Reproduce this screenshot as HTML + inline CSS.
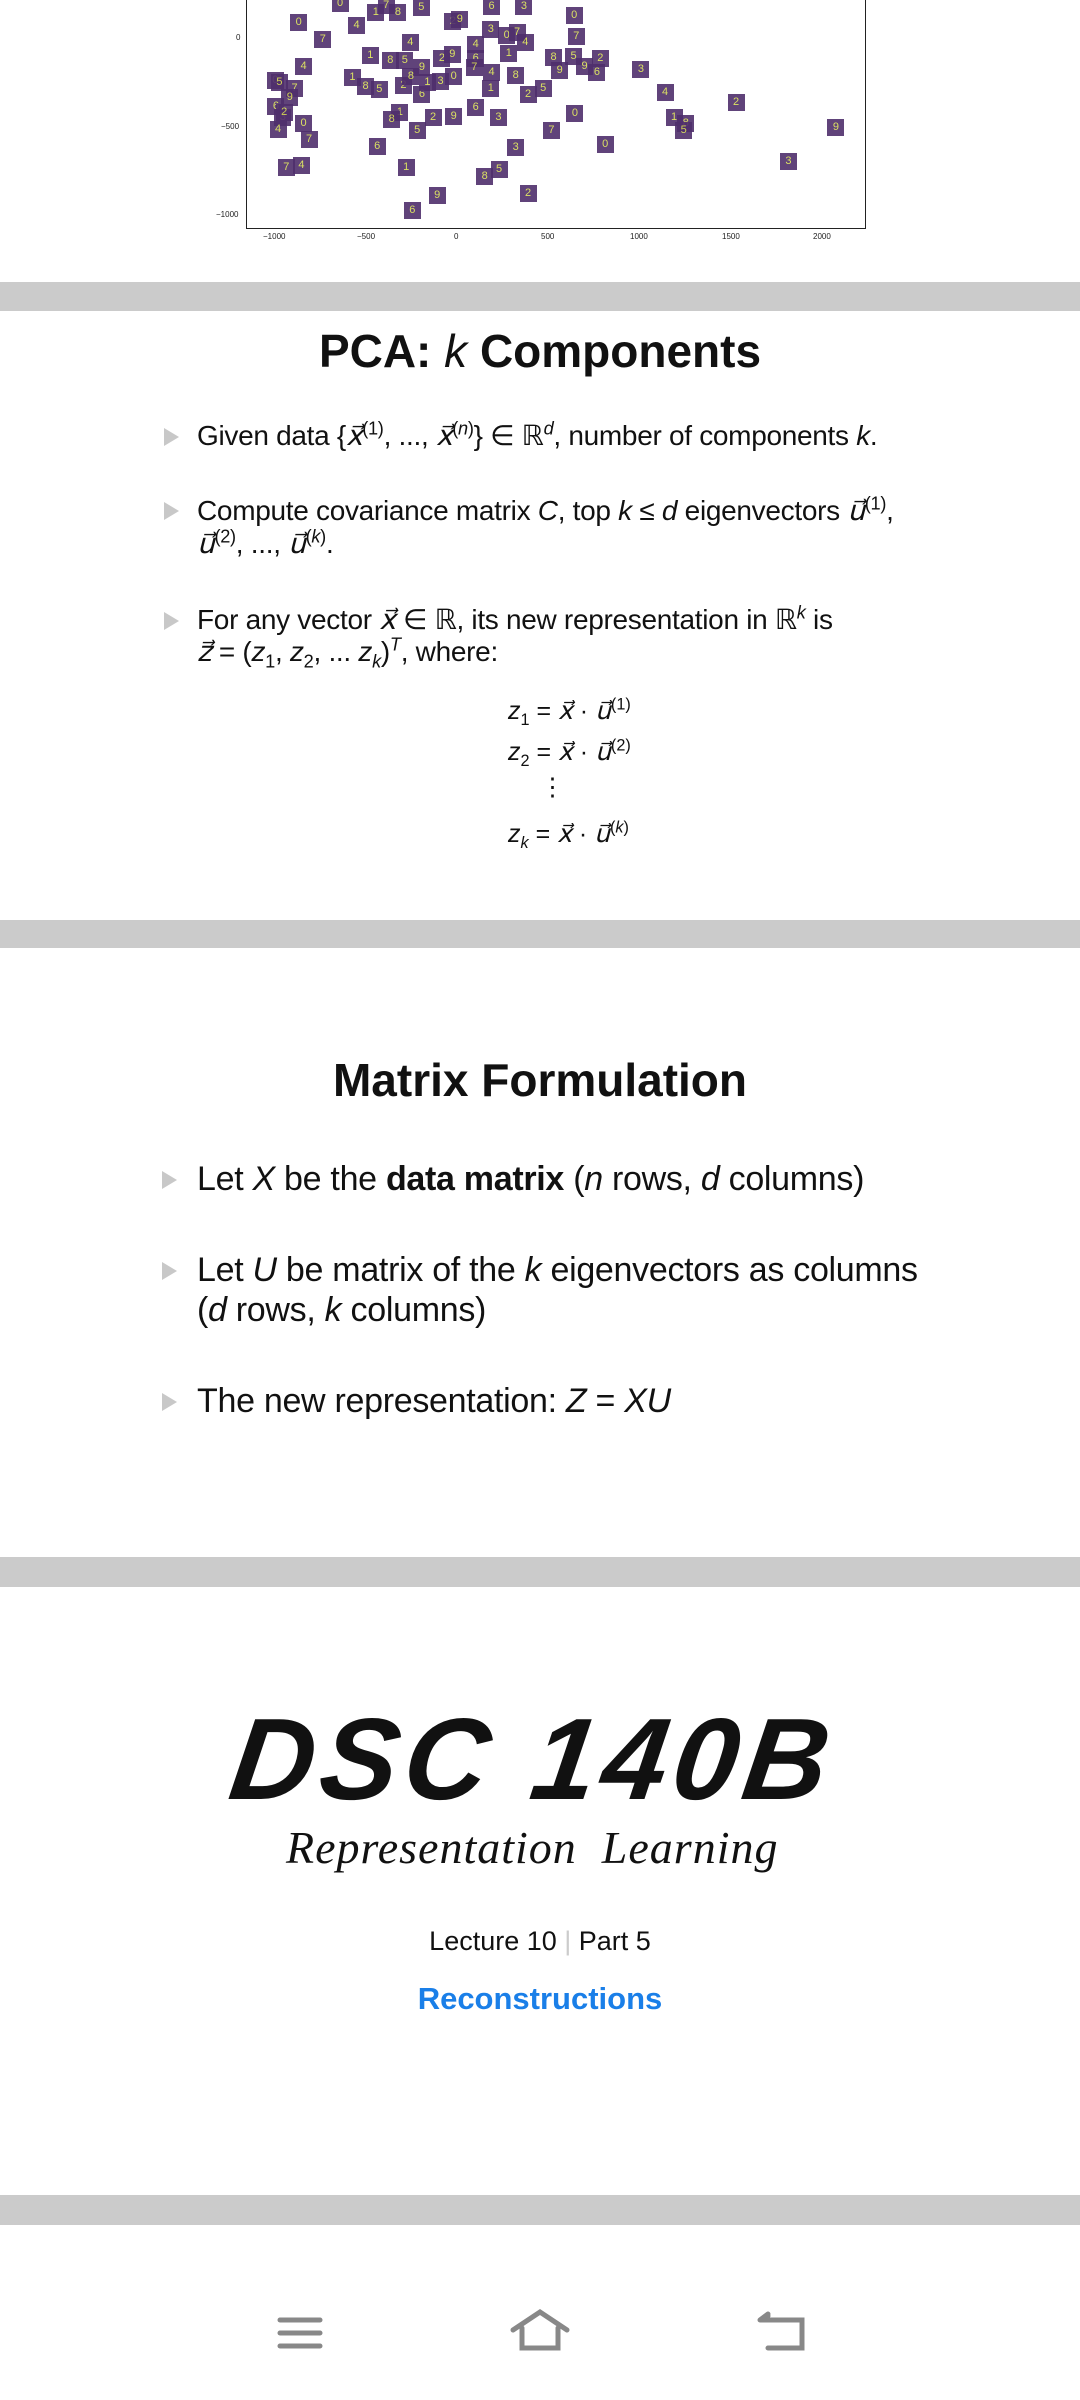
<!DOCTYPE html>
<html><head><meta charset="utf-8"><style>
*{margin:0;padding:0;box-sizing:border-box}
body{width:1080px;height:2400px;background:#fff;position:relative;overflow:hidden;font-family:"Liberation Sans Narrow","Liberation Sans",sans-serif;color:#111}
.a{position:absolute;white-space:nowrap}
.band{position:absolute;left:0;width:1080px;background:#cbcbcb}
.tri{position:absolute;width:0;height:0;border-top:9px solid transparent;border-bottom:9px solid transparent;border-left:15px solid #c8c8c8}
.t{position:absolute;left:0;width:1080px;text-align:center;font-family:"Liberation Sans",sans-serif;font-weight:bold}
.p{font-size:28px;letter-spacing:-0.3px}
.m{font-size:34px;letter-spacing:-0.3px}
i{font-style:italic}
sup,sub{font-size:65%;line-height:0}
.d{position:absolute;width:17px;height:17px;background:#4f2f6c;color:#d8df52;font-size:11px;line-height:17px;text-align:center;font-family:"Liberation Sans",sans-serif;opacity:.9}
.tk{position:absolute;font-size:8px;font-family:"Liberation Sans",sans-serif;color:#222}
</style></head><body>
<div class="a" style="left:246px;top:-2px;width:620px;height:231px;border:1.5px solid #222;border-top:none"></div>
<div id="pl"></div>
<div class="tk" style="left:236px;top:33px">0</div>
<div class="tk" style="left:221px;top:122px">−500</div>
<div class="tk" style="left:216px;top:210px">−1000</div>
<div class="tk" style="left:263px;top:232px">−1000</div>
<div class="tk" style="left:357px;top:232px">−500</div>
<div class="tk" style="left:454px;top:232px">0</div>
<div class="tk" style="left:541px;top:232px">500</div>
<div class="tk" style="left:630px;top:232px">1000</div>
<div class="tk" style="left:722px;top:232px">1500</div>
<div class="tk" style="left:813px;top:232px">2000</div>
<script>
var P=[[433,38],[468,67],[517,42],[545,20],[577,20],[611,12],[657,35],[667,32],[713,10],[760,10],[833,25],[836,62],[595,72],[537,93],[566,103],[587,103],[641,98],[656,92],[690,98],[712,50],[735,60],[750,55],[762,72],[738,90],[803,97],[832,95],[871,98],[848,112],[866,123],[930,117],[399,136],[427,150],[440,113],[511,131],[530,146],[550,152],[585,145],[612,115],[612,160],[639,138],[658,130],[688,115],[713,122],[712,150],[748,127],[788,150],[766,160],[812,120],[400,180],[410,200],[440,210],[448,237],[403,220],[580,190],[568,203],[605,222],[628,200],[658,198],[690,183],[723,200],[834,192],[800,222],[965,157],[978,200],[995,210],[992,222],[1068,174],[1213,217],[547,249],[748,250],[878,245],[415,285],[437,281],[589,284],[703,300],[724,288],[766,329],[634,332],[598,358],[1144,275],[493,5],[560,8],[690,75],[620,140],[596,130],[405,140],[412,190],[420,165]];
var D="0123456789",h="";
P.forEach(function(p,i){h+='<div class="d" style="left:'+(p[0]/1.452-8)+'px;top:'+(p[1]/1.704-8)+'px">'+D[(i*7)%10]+'</div>';});
document.getElementById('pl').innerHTML=h;
</script>

<div class="band" style="top:282px;height:29px"></div>

<div class="t" style="top:324px;font-size:46px">PCA: <i style="font-weight:normal">k</i> Components</div>
<div class="tri" style="left:164px;top:428px"></div>
<div class="a p" style="left:197px;top:419px">Given data {<i>x⃗</i><sup>(1)</sup>, ..., <i>x⃗</i><sup>(<i>n</i>)</sup>} ∈ ℝ<sup><i>d</i></sup>, number of components <i>k</i>.</div>
<div class="tri" style="left:164px;top:502px"></div>
<div class="a p" style="left:197px;top:494px">Compute covariance matrix <i>C</i>, top <i>k</i> ≤ <i>d</i> eigenvectors <i>u⃗</i><sup>(1)</sup>,</div>
<div class="a p" style="left:197px;top:527px"><i>u⃗</i><sup>(2)</sup>, ..., <i>u⃗</i><sup>(<i>k</i>)</sup>.</div>
<div class="tri" style="left:164px;top:612px"></div>
<div class="a p" style="left:197px;top:603px">For any vector <i>x⃗</i> ∈ ℝ, its new representation in ℝ<sup><i>k</i></sup> is</div>
<div class="a p" style="left:197px;top:635px"><i>z⃗</i> = (<i>z</i><sub>1</sub>, <i>z</i><sub>2</sub>, ... <i>z<sub>k</sub></i>)<sup><i>T</i></sup>, where:</div>
<div class="a" style="left:508px;top:696px;font-size:25px"><i>z</i><sub>1</sub> = <i>x⃗</i> · <i>u⃗</i><sup>(1)</sup></div>
<div class="a" style="left:508px;top:737px;font-size:25px"><i>z</i><sub>2</sub> = <i>x⃗</i> · <i>u⃗</i><sup>(2)</sup></div>
<div class="a" style="left:540px;top:772px;font-size:25px">⋮</div>
<div class="a" style="left:508px;top:819px;font-size:25px"><i>z<sub>k</sub></i> = <i>x⃗</i> · <i>u⃗</i><sup>(<i>k</i>)</sup></div>

<div class="band" style="top:920px;height:28px"></div>

<div class="t" style="top:1053px;font-size:46px">Matrix Formulation</div>
<div class="tri" style="left:162px;top:1171px"></div>
<div class="a m" style="left:197px;top:1160px">Let <i>X</i> be the <b>data matrix</b> (<i>n</i> rows, <i>d</i> columns)</div>
<div class="tri" style="left:162px;top:1262px"></div>
<div class="a m" style="left:197px;top:1251px">Let <i>U</i> be matrix of the <i>k</i> eigenvectors as columns</div>
<div class="a m" style="left:197px;top:1291px">(<i>d</i> rows, <i>k</i> columns)</div>
<div class="tri" style="left:162px;top:1393px"></div>
<div class="a m" style="left:197px;top:1382px">The new representation: <i>Z</i> = <i>XU</i></div>

<div class="band" style="top:1557px;height:30px"></div>

<div class="a" style="left:232px;top:1692px;font-family:'Liberation Sans',sans-serif;font-style:italic;font-weight:bold;font-size:116px;letter-spacing:6px;transform:skewX(-8deg)">DSC 140B</div>
<div class="a" style="left:286px;top:1821px;font-family:'Liberation Serif',serif;font-style:italic;font-size:46px;letter-spacing:1px">Representation&nbsp; Learning</div>
<div class="t" style="top:1926px;font-size:27px;font-weight:normal;font-family:'Liberation Sans Narrow','Liberation Sans',sans-serif">Lecture 10 <span style="color:#ccc">|</span> Part 5</div>
<div class="t" style="top:1981px;font-size:31px;color:#1a7fe8;font-family:'Liberation Sans Narrow','Liberation Sans',sans-serif">Reconstructions</div>

<div class="band" style="top:2195px;height:30px"></div>

<svg class="a" style="left:0;top:2290px" width="1080" height="90">
<g stroke="#888" stroke-width="5" stroke-linecap="round" fill="none">
<line x1="280" y1="30" x2="320" y2="30"/><line x1="280" y1="43" x2="320" y2="43"/><line x1="280" y1="56" x2="320" y2="56"/>
<path d="M513 40 L540 22 L567 40 M522 38 V58 H558 V38"/>
<path d="M760 30 H802 V58 H768 M768 24 L760 30 L768 26"/>
</g></svg>
</body></html>
